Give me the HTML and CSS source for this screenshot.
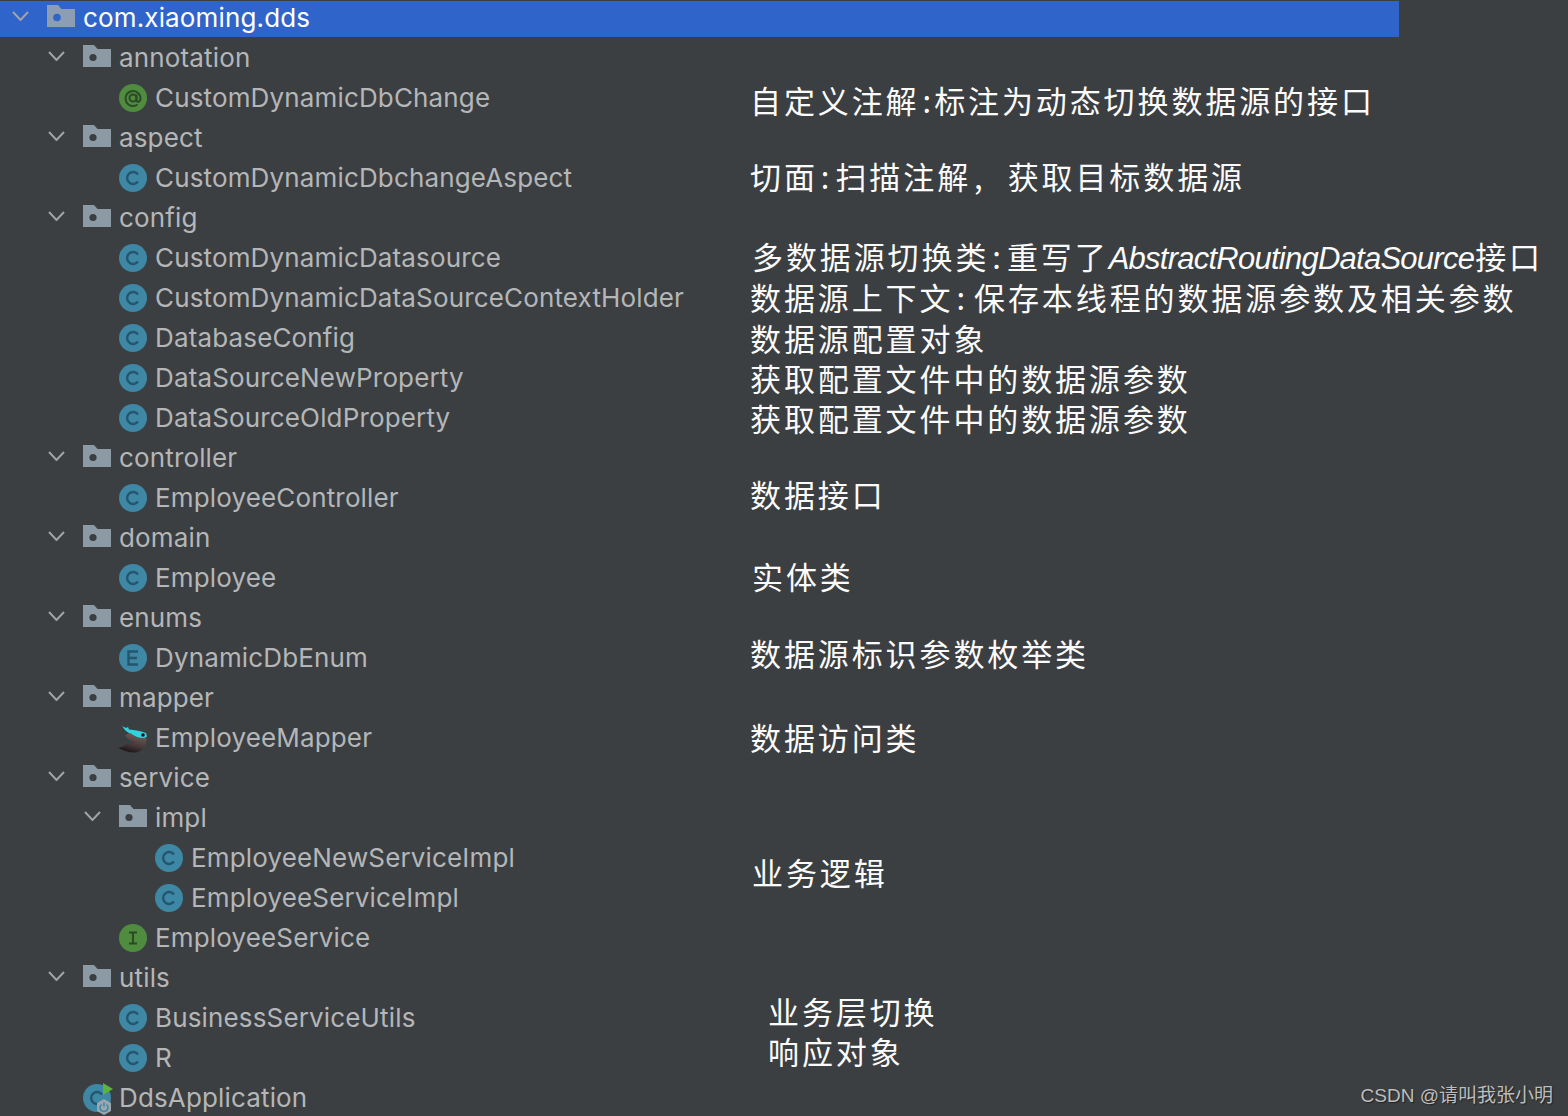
FILE: index.html
```html
<!DOCTYPE html>
<html lang="zh-CN">
<head>
<meta charset="utf-8">
<title>com.xiaoming.dds</title>
<link rel="stylesheet" href="styles.css">
</head>
<body>
<svg class="defs" width="0" height="0" aria-hidden="true">
  <defs>
    <linearGradient id="birdbody" x1="0.7" y1="0" x2="0.3" y2="1"><stop offset="0" stop-color="#75605c"/><stop offset="0.6" stop-color="#47383a"/><stop offset="1" stop-color="#151212"/></linearGradient>
  </defs>
  <symbol id="chev" viewBox="0 0 17 10"><path d="M1 1l7.500 8L16 1" fill="none" stroke="#a0a4a6" stroke-width="2"/></symbol>
  <symbol id="folder" viewBox="0 0 28 22"><path d="M0 0h11l3.500 4H28v18H0z" fill="#8c9aa6"/><circle cx="10" cy="12.500" r="3.600" fill="#3c3f41"/></symbol>
  <symbol id="rootfolder" viewBox="0 0 28 22"><path d="M0 0h11l3.500 4H28v18H0z" fill="#8c9db4"/><circle cx="10" cy="12.500" r="3.800" fill="#2f65ca"/></symbol>
  <symbol id="cls" viewBox="0 0 28 28"><circle cx="14" cy="14" r="14" fill="#3e87a5"/><path d="M19 10.500a6 6 0 1 0 0 7" fill="none" stroke="#24566d" stroke-width="2.400"/></symbol>
  <symbol id="enum" viewBox="0 0 28 28"><circle cx="14" cy="14" r="14" fill="#3e87a5"/><path d="M19 7.500h-9.500v13H19M9.500 14H18" fill="none" stroke="#24566d" stroke-width="2.400"/></symbol>
  <symbol id="iface" viewBox="0 0 28 28"><circle cx="14" cy="14" r="14" fill="#4f8c40"/><path d="M10 8.500h8M10 19.500h8M14 8.500v11" fill="none" stroke="#2b4a25" stroke-width="2"/></symbol>
  <symbol id="anno" viewBox="0 0 28 28"><circle cx="14" cy="14" r="14" fill="#4f8c40"/><circle cx="14" cy="14" r="3.500" fill="none" stroke="#2b4a25" stroke-width="2"/><path d="M17.500 10.500v5.500c0 2.500 4 2.500 4-1.500a7.500 7.500 0 1 0-3 6" fill="none" stroke="#2b4a25" stroke-width="2"/></symbol>
</svg>

<main class="tree">
  <div class="row root d0"><svg class="chev"><use href="#chev"/></svg><svg class="ic"><use href="#rootfolder"/></svg><span class="label sel">com.xiaoming.dds</span></div>
  <div class="row d1"><svg class="chev"><use href="#chev"/></svg><svg class="ic"><use href="#folder"/></svg><span class="label">annotation</span></div>
  <div class="row d2"><span class="nochev"></span><svg class="ic round"><use href="#anno"/></svg><span class="label">CustomDynamicDbChange</span></div>
  <div class="row d1"><svg class="chev"><use href="#chev"/></svg><svg class="ic"><use href="#folder"/></svg><span class="label">aspect</span></div>
  <div class="row d2"><span class="nochev"></span><svg class="ic round"><use href="#cls"/></svg><span class="label">CustomDynamicDbchangeAspect</span></div>
  <div class="row d1"><svg class="chev"><use href="#chev"/></svg><svg class="ic"><use href="#folder"/></svg><span class="label">config</span></div>
  <div class="row d2"><span class="nochev"></span><svg class="ic round"><use href="#cls"/></svg><span class="label">CustomDynamicDatasource</span></div>
  <div class="row d2"><span class="nochev"></span><svg class="ic round"><use href="#cls"/></svg><span class="label">CustomDynamicDataSourceContextHolder</span></div>
  <div class="row d2"><span class="nochev"></span><svg class="ic round"><use href="#cls"/></svg><span class="label">DatabaseConfig</span></div>
  <div class="row d2"><span class="nochev"></span><svg class="ic round"><use href="#cls"/></svg><span class="label">DataSourceNewProperty</span></div>
  <div class="row d2"><span class="nochev"></span><svg class="ic round"><use href="#cls"/></svg><span class="label">DataSourceOldProperty</span></div>
  <div class="row d1"><svg class="chev"><use href="#chev"/></svg><svg class="ic"><use href="#folder"/></svg><span class="label">controller</span></div>
  <div class="row d2"><span class="nochev"></span><svg class="ic round"><use href="#cls"/></svg><span class="label">EmployeeController</span></div>
  <div class="row d1"><svg class="chev"><use href="#chev"/></svg><svg class="ic"><use href="#folder"/></svg><span class="label">domain</span></div>
  <div class="row d2"><span class="nochev"></span><svg class="ic round"><use href="#cls"/></svg><span class="label">Employee</span></div>
  <div class="row d1"><svg class="chev"><use href="#chev"/></svg><svg class="ic"><use href="#folder"/></svg><span class="label">enums</span></div>
  <div class="row d2"><span class="nochev"></span><svg class="ic round"><use href="#enum"/></svg><span class="label">DynamicDbEnum</span></div>
  <div class="row d1"><svg class="chev"><use href="#chev"/></svg><svg class="ic"><use href="#folder"/></svg><span class="label">mapper</span></div>
  <div class="row d2"><span class="nochev"></span>
    <svg class="ic bird" viewBox="0 0 30 30">
      <path d="M0 24.500c4 0 8-1.500 9-4 2 1.500 6 1.500 9-1-3-1-7-3-10-6.500 4-5 18-5 21 0 2 8-3 16.500-11 16.500-7 0-13-2-18-5.500z" fill="url(#birdbody)"/>
      <path d="M5 3l4 2 2-1 1 2.500c6 .5 12 1.500 17 3.500l1 3.500-3 1.500c-5 0-9-1.500-13-4.500-3-.5-7-3.500-9-8z" fill="#2fd4e0"/>
      <circle cx="26" cy="12" r="1.800" fill="#20140f"/>
    </svg>
    <span class="label">EmployeeMapper</span></div>
  <div class="row d1"><svg class="chev"><use href="#chev"/></svg><svg class="ic"><use href="#folder"/></svg><span class="label">service</span></div>
  <div class="row d2"><svg class="chev"><use href="#chev"/></svg><svg class="ic"><use href="#folder"/></svg><span class="label">impl</span></div>
  <div class="row d3"><span class="nochev"></span><svg class="ic round"><use href="#cls"/></svg><span class="label">EmployeeNewServiceImpl</span></div>
  <div class="row d3"><span class="nochev"></span><svg class="ic round"><use href="#cls"/></svg><span class="label">EmployeeServiceImpl</span></div>
  <div class="row d2"><span class="nochev"></span><svg class="ic round"><use href="#iface"/></svg><span class="label">EmployeeService</span></div>
  <div class="row d1"><svg class="chev"><use href="#chev"/></svg><svg class="ic"><use href="#folder"/></svg><span class="label">utils</span></div>
  <div class="row d2"><span class="nochev"></span><svg class="ic round"><use href="#cls"/></svg><span class="label">BusinessServiceUtils</span></div>
  <div class="row d2"><span class="nochev"></span><svg class="ic round"><use href="#cls"/></svg><span class="label">R</span></div>
  <div class="row d1"><span class="nochev"></span>
    <svg class="ic app" viewBox="0 0 34 34">
      <circle cx="14" cy="17" r="14" fill="#3e87a5"/>
      <path d="M19 13.500a6 6 0 1 0 0 7" fill="none" stroke="#24566d" stroke-width="2.400"/>
      <path d="M20 2l10 6-10 6z" fill="#5bb33a"/>
      <path d="M21 18l7 4v8l-7 4-7-4v-8z" fill="#9aa7b0"/>
      <path d="M18.500 23.500a4 4 0 1 0 5 0M21 21.500v4" fill="none" stroke="#3e87a5" stroke-width="1.500"/>
    </svg>
    <span class="label">DdsApplication</span></div>
</main>

<aside class="notes">
  <p class="note n1">自定义注解<i>:</i>标注为动态切换数据源的接口</p>
  <p class="note n2">切面<i class="wide">:</i>扫描注解<i class="comma">,</i>获取目标数据源</p>
  <p class="note n3">多数据源切换类<i class="wide">:</i>重写了<em>AbstractRoutingDataSource</em>接口</p>
  <p class="note n4">数据源上下文<i class="wider">:</i>保存本线程的数据源参数及相关参数</p>
  <p class="note n5">数据源配置对象</p>
  <p class="note n6">获取配置文件中的数据源参数</p>
  <p class="note n7">获取配置文件中的数据源参数</p>
  <p class="note n8">数据接口</p>
  <p class="note n9">实体类</p>
  <p class="note n10">数据源标识参数枚举类</p>
  <p class="note n11">数据访问类</p>
  <p class="note n12">业务逻辑</p>
  <p class="note n13">业务层切换</p>
  <p class="note n14">响应对象</p>
</aside>

<footer class="mark">CSDN @请叫我张小明</footer>
</body>
</html>
```
FILE: styles.css
```css
html, body {
  margin: 0;
  height: 1116px;
  overflow: hidden;
  background: #3c3f41;
}
body {
  position: relative;
  font-family: Inter, "Noto Sans CJK SC", sans-serif;
}
.defs { position: absolute; }
.tree { display: flex; flex-direction: column; }
.row {
  display: flex;
  align-items: center;
  height: 40px;
  flex: none;
  color: #b4b6b8;
  font-size: 26px;
  letter-spacing: 0.15px;
}
.d0 { padding-left: 12px; }
.d1 { padding-left: 48px; }
.d2 { padding-left: 84px; }
.d3 { padding-left: 120px; }
.root {
  height: 36px;
  margin: 1px 0;
  width: 1399px;
  box-sizing: border-box;
  background: #2f65ca;
}
.chev { width: 17px; height: 10px; margin-right: 18px; margin-bottom: 4px; flex: none; }
.nochev { width: 35px; flex: none; }
.ic { width: 28px; height: 22px; flex: none; margin-right: 8px; margin-bottom: 4px; }
.ic.round { height: 28px; margin-bottom: 0; }
.ic.bird { width: 30px; height: 30px; margin: 0 8px 0 -2px; }
.ic.app { width: 34px; height: 34px; margin: 0 2px 0 0; }
.label { white-space: nowrap; margin-bottom: 2px; }
.root .chev, .root .ic { margin-bottom: 6px; }
.root .label { margin-bottom: 3px; }
.sel { color: #fff; }

.notes { position: absolute; inset: 0; pointer-events: none; }
.note {
  position: absolute;
  margin: 0;
  color: #fbfbfb;
  font-family: "Noto Sans CJK SC", sans-serif;
  font-weight: 400;
  font-size: 31px;
  line-height: 38px;
  letter-spacing: 2.900px;
  white-space: nowrap;
}
.note i { font-style: normal; margin: 0 3px; letter-spacing: 0; }
.note i.wide { margin: 0 6px 0 3px; }
.note i.wider { margin: 0 9px 0 3px; }
.note i.comma { margin: 0 25px 0 3px; }
.note em {
  font-family: "Liberation Sans", sans-serif;
  font-style: italic;
  letter-spacing: -0.750px;
  font-size: 31px;
  margin: 0 1px 0 0;
}
.n1 { left: 750px; top: 81px; }
.n2 { left: 750px; top: 157px; }
.n3 { left: 752px; top: 237px; }
.n4 { left: 750px; top: 278px; }
.n5 { left: 750px; top: 319px; }
.n6 { left: 750px; top: 359px; }
.n7 { left: 750px; top: 399px; }
.n8 { left: 750px; top: 475px; }
.n9 { left: 752px; top: 557px; }
.n10 { left: 750px; top: 634px; }
.n11 { left: 750px; top: 718px; }
.n12 { left: 752px; top: 853px; }
.n13 { left: 768px; top: 992px; }
.n14 { left: 768px; top: 1032px; }

.mark {
  position: absolute;
  right: 15px;
  bottom: 8px;
  color: #bdbdbd;
  font-family: "Liberation Sans", "Noto Sans CJK SC", sans-serif;
  font-size: 19px;
  line-height: 24px;
  text-shadow: 1px 1px 1px #222;
}
```
